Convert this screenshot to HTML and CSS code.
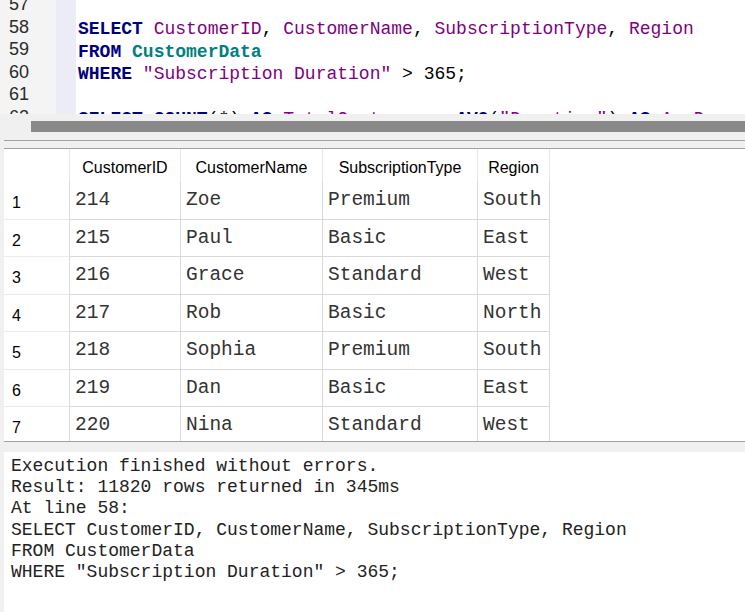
FILE: index.html
```html
<!DOCTYPE html>
<html>
<head>
<meta charset="utf-8">
<link rel="stylesheet" href="styles.css">
</head>
<body>
<div class="editor">
  <div class="gutter">
    <div class="nums">
      <div>57</div><div>58</div><div>59</div><div>60</div><div>61</div><div>62</div>
    </div>
  </div>
  <div class="fold"></div>
  <div class="code">
    <div class="lines">
      <div class="ln">&nbsp;</div>
      <div class="ln"><span class="kw">SELECT</span> <span class="id">CustomerID</span>, <span class="id">CustomerName</span>, <span class="id">SubscriptionType</span>, <span class="id">Region</span></div>
      <div class="ln"><span class="kw">FROM</span> <span class="tb">CustomerData</span></div>
      <div class="ln"><span class="kw">WHERE</span> <span class="id">"Subscription Duration"</span> &gt; 365;</div>
      <div class="ln">&nbsp;</div>
      <div class="ln"><span class="kw">SELECT</span> <span class="kw">COUNT</span>(*) <span class="kw">AS</span> <span class="id">TotalCustomers</span>, <span class="kw">AVG</span>(<span class="id">"Duration"</span>) <span class="kw">AS</span> <span class="id">AvgDays</span></div>
    </div>
  </div>
</div>
<div class="hscroll"><div class="thumb"></div></div>
<div class="split"></div>
<div class="results">
  <div class="grid">
    <div class="hd corner"></div>
    <div class="hd">CustomerID</div>
    <div class="hd">CustomerName</div>
    <div class="hd">SubscriptionType</div>
    <div class="hd">Region</div>

    <div class="rh">1</div><div class="c">214</div><div class="c">Zoe</div><div class="c">Premium</div><div class="c">South</div>
    <div class="rh">2</div><div class="c">215</div><div class="c">Paul</div><div class="c">Basic</div><div class="c">East</div>
    <div class="rh">3</div><div class="c">216</div><div class="c">Grace</div><div class="c">Standard</div><div class="c">West</div>
    <div class="rh">4</div><div class="c">217</div><div class="c">Rob</div><div class="c">Basic</div><div class="c">North</div>
    <div class="rh">5</div><div class="c">218</div><div class="c">Sophia</div><div class="c">Premium</div><div class="c">South</div>
    <div class="rh">6</div><div class="c">219</div><div class="c">Dan</div><div class="c">Basic</div><div class="c">East</div>
    <div class="rh">7</div><div class="c">220</div><div class="c">Nina</div><div class="c">Standard</div><div class="c">West</div>
  </div>
</div>
<div class="gap"></div>
<div class="messages">
<pre class="msg">Execution finished without errors.
Result: 11820 rows returned in 345ms
At line 58:
SELECT CustomerID, CustomerName, SubscriptionType, Region
FROM CustomerData
WHERE "Subscription Duration" &gt; 365;</pre>
</div>
</body>
</html>
```
FILE: styles.css
```css
* { box-sizing: border-box; }
html, body {
  margin: 0;
  padding: 0;
  background: #f0f0f0;
  width: 745px;
  height: 612px;
  overflow: hidden;
}
.editor {
  display: flex;
  height: 114px;
  background: #ffffff;
  overflow: hidden;
}
.gutter {
  width: 56px;
  flex: none;
  background: #f4f4f4;
  overflow: hidden;
}
.nums {
  margin-top: -6.7px;
  padding-left: 9px;
  font-family: "Liberation Sans", Arial, sans-serif;
  font-size: 18px;
  line-height: 22.5px;
  color: #2b2b2b;
}
.fold {
  width: 20px;
  flex: none;
  background: #ececf7;
}
.code {
  flex: 1;
  overflow: hidden;
  padding-left: 2px;
}
.lines {
  margin-top: -4.25px;
  font-family: "Liberation Mono", "Courier New", monospace;
  font-size: 18px;
  line-height: 22.5px;
  color: #000;
}
.ln { white-space: pre; height: 22.5px; }
.kw { color: #000080; font-weight: bold; }
.id { color: #800080; }
.tb { color: #008080; font-weight: bold; }

.hscroll {
  height: 26px;
  padding-top: 7px;
  background: #f0f0f0;
}
.thumb {
  height: 11px;
  margin-left: 31px;
  background: #898989;
}
.split {
  height: 8px;
  margin-left: 4px;
  border-top: 1px solid #a0a0a0;
}
.results {
  height: 294px;
  margin-left: 4px;
  background: #ffffff;
  border-top: 1px solid #a0a0a0;
  border-bottom: 1px solid #a0a0a0;
  overflow: hidden;
}
.grid {
  display: grid;
  grid-template-columns: 66px 111px 142px 155px 72px;
  grid-template-rows: 33px;
  grid-auto-rows: 37.5px;
}
.hd {
  display: flex;
  align-items: center;
  justify-content: center;
  padding-top: 4px;
  font-family: "Liberation Sans", Arial, sans-serif;
  font-size: 16px;
  color: #000;
  border-right: 1px solid #e6e6e6;
}
.rh {
  display: flex;
  align-items: center;
  padding-left: 8px;
  padding-top: 6px;
  font-family: "Liberation Sans", Arial, sans-serif;
  font-size: 16px;
  color: #000;
  border-right: 1px solid #d9d9d9;
  border-bottom: 1px solid #ebebeb;
}
.c {
  display: flex;
  align-items: center;
  padding-left: 5px;
  font-family: "Liberation Mono", "Courier New", monospace;
  font-size: 19.5px;
  color: #333;
  white-space: pre;
  border-right: 1px solid #d9d9d9;
  border-bottom: 1px solid #d9d9d9;
}
.gap {
  height: 10px;
}
.messages {
  height: 160px;
  margin-left: 4px;
  background: #ffffff;
  padding: 4px 7px;
}
.msg {
  margin: 0;
  font-family: "Liberation Mono", "Courier New", monospace;
  font-size: 18px;
  line-height: 21.2px;
  color: #222;
}
```
